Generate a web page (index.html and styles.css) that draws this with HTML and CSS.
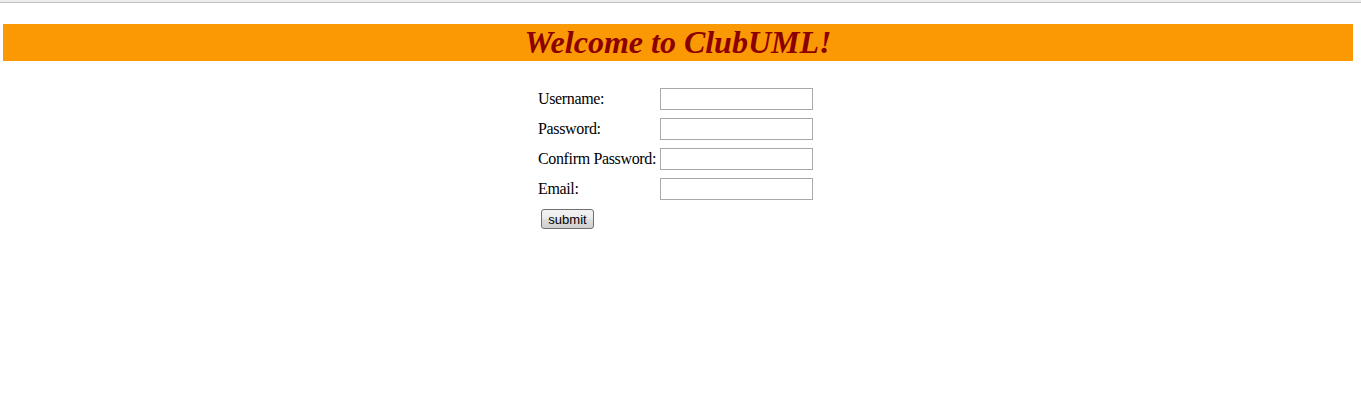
FILE: index.html
```html
<!DOCTYPE html>
<html>
<head>
<meta charset="utf-8">
<link rel="stylesheet" href="styles.css">
<title>ClubUML</title>
</head>
<body>
<div class="chrome-line"></div>
<div class="banner"><h1 class="title">Welcome to ClubUML!</h1></div>
<form class="signup">
  <label class="lbl" for="u">Username:</label><input class="field" id="u" type="text">
  <label class="lbl" for="p">Password:</label><input class="field" id="p" type="password">
  <label class="lbl" for="c">Confirm Password:</label><input class="field" id="c" type="password">
  <label class="lbl" for="e">Email:</label><input class="field" id="e" type="text">
  <div class="actions"><button class="submit" type="button">submit</button></div>
</form>
</body>
</html>
```
FILE: styles.css
```css
html, body {
  margin: 0;
  padding: 0;
  background: #ffffff;
}
body {
  font-family: "Liberation Serif", "Times New Roman", serif;
  color: #000;
}
.chrome-line {
  height: 2px;
  background: #ececec;
  border-bottom: 1px solid #c2c2c2;
}
.banner {
  margin: 21px 8px 0 3px;
  height: 37px;
  background: #fb9905;
  display: flex;
  align-items: center;
  justify-content: center;
}
.title {
  margin: 0;
  font-family: "Liberation Serif", "Times New Roman", serif;
  font-size: 32px;
  font-weight: bold;
  font-style: italic;
  color: #8b0000;
  line-height: 37px;
}
.signup {
  margin: 27px 0 0 538px;
  display: grid;
  grid-template-columns: 122px 153px;
  grid-auto-rows: 22px;
  row-gap: 8px;
  width: 275px;
}
.lbl {
  font-size: 16px;
  letter-spacing: -0.35px;
  display: flex;
  align-items: center;
  line-height: 22px;
  white-space: nowrap;
}
.field {
  box-sizing: border-box;
  width: 153px;
  height: 22px;
  margin: 0;
  border: 1px solid #a9a9a9;
  background: #fff;
  padding: 0 2px;
}
.actions {
  grid-column: 1 / 3;
  padding: 1px 0 0 3px;
  display: flex;
  align-items: flex-start;
}
.submit {
  box-sizing: border-box;
  width: 53px;
  height: 20px;
  padding: 0;
  font-family: "Liberation Sans", Arial, sans-serif;
  font-size: 13px;
  color: #000;
  border: 1px solid #707070;
  border-radius: 3px;
  background: linear-gradient(#f2f2f2 0%, #ebebeb 50%, #dddddd 51%, #cfcfcf 100%);
}
```
